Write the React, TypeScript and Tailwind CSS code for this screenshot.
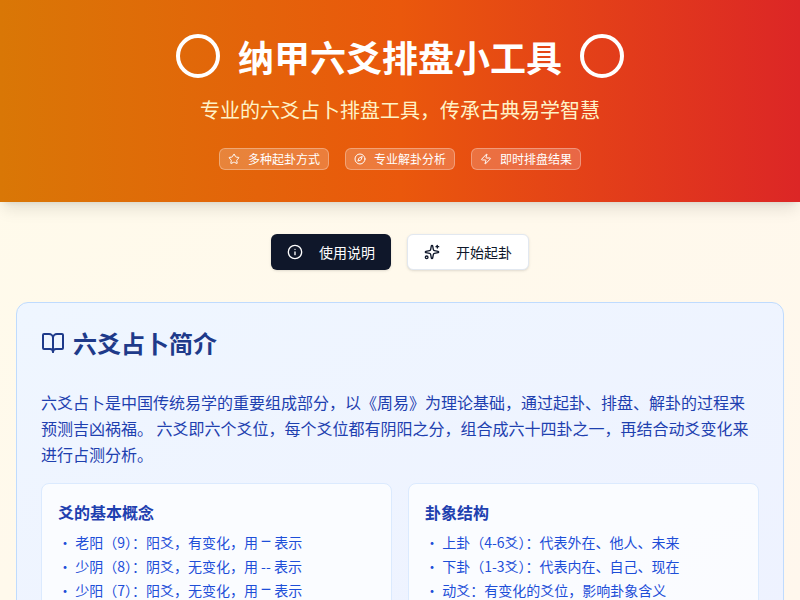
import type { ReactNode } from 'react';
import { BookOpen, Circle, Compass, Info, Sparkles, Star, Zap } from 'lucide-react';

const fontStack = 'font-["Noto_Sans_CJK_SC",sans-serif]';

const badges = [
  { icon: Star, label: '多种起卦方式' },
  { icon: Compass, label: '专业解卦分析' },
  { icon: Zap, label: '即时排盘结果' },
];

const yang = <span className="text-[18px] leading-[0]">−</span>;

const sections: { title: string; items: ReactNode[] }[] = [
  {
    title: '爻的基本概念',
    items: [
      <>老阳（9）：阳爻，有变化，用 {yang} 表示</>,
      <>少阴（8）：阴爻，无变化，用 -- 表示</>,
      <>少阳（7）：阳爻，无变化，用 {yang} 表示</>,
    ],
  },
  {
    title: '卦象结构',
    items: ['上卦（4-6爻）：代表外在、他人、未来', '下卦（1-3爻）：代表内在、自己、现在', '动爻：有变化的爻位，影响卦象含义'],
  },
];

export default function App() {
  return (
    <div className={`${fontStack} h-screen overflow-hidden bg-[linear-gradient(to_bottom_right,#fffbeb,#fff7ed)]`}>
      {/* 顶部 */}
      <header className="bg-[linear-gradient(to_right,#d97706,#ea580c,#dc2626)] text-white py-8 shadow-lg">
        <div className="flex items-center justify-center gap-4 mb-4">
          <Circle className="w-12 h-12" />
          <h1 className="text-4xl font-bold">纳甲六爻排盘小工具</h1>
          <Circle className="w-12 h-12" />
        </div>
        <p className="text-xl text-center text-[#fef3c7] mb-6">专业的六爻占卜排盘工具，传承古典易学智慧</p>
        <div className="flex justify-center gap-4">
          {badges.map((b) => (
            <span key={b.label} className="flex items-center px-2 py-0.5 text-xs rounded-md bg-white/20 border border-white/30 text-white">
              <b.icon className="w-3 h-3 mr-2" />
              {b.label}
            </span>
          ))}
        </div>
      </header>

      <main className="p-4">
        <div className="flex justify-center gap-4 mt-4 mb-8">
          <button className="flex items-center h-9 px-4 rounded-md bg-[#0f172a] text-white text-sm shadow-sm">
            <Info className="w-4 h-4 mr-4" />
            使用说明
          </button>
          <button className="flex items-center h-9 px-4 rounded-md bg-white border border-[#e2e8f0] text-[#0f172a] text-sm shadow-sm">
            <Sparkles className="w-4 h-4 mr-4" />
            开始起卦
          </button>
        </div>

        <section className="rounded-xl border border-[#bfdbfe] bg-[linear-gradient(to_bottom_right,#eff6ff,#eef2ff)] p-6">
          <h2 className="flex items-center gap-2 text-2xl font-semibold text-[#1e3a8a] mb-[30px]">
            <BookOpen className="w-6 h-6" />
            六爻占卜简介
          </h2>
          <p className="text-base leading-relaxed text-[#1e40af] mb-4">
            六爻占卜是中国传统易学的重要组成部分，以《周易》为理论基础，通过起卦、排盘、解卦的过程来预测吉凶祸福。 六爻即六个爻位，每个爻位都有阴阳之分，组合成六十四卦之一，再结合动爻变化来进行占测分析。
          </p>
          <div className="grid grid-cols-2 gap-4">
            {sections.map((s) => (
              <div key={s.title} className="rounded-lg border border-[#dbeafe] bg-white/70 p-4">
                <h3 className="font-semibold text-[#1e40af] mb-2">{s.title}</h3>
                <ul className="text-sm text-[#1d4ed8] space-y-1">
                  {s.items.map((item, i) => (
                    <li key={i}>• {item}</li>
                  ))}
                </ul>
              </div>
            ))}
          </div>
        </section>
      </main>
    </div>
  );
}
